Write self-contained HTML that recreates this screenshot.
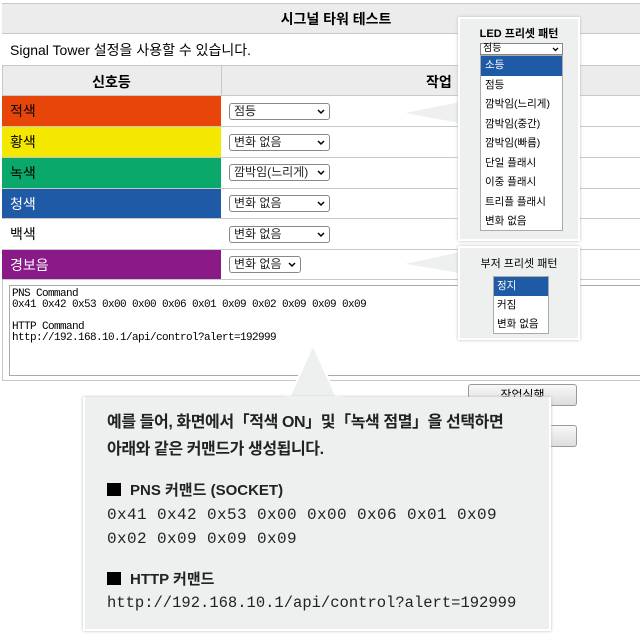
<!DOCTYPE html>
<html><head><meta charset="utf-8"><style>
*{box-sizing:border-box;margin:0;padding:0}
body{width:640px;height:642px;background:#fff;font-family:"Liberation Sans","Noto Sans CJK KR",sans-serif;position:relative;overflow:hidden;color:#000}
.abs{position:absolute}
.hl{position:absolute;left:2px;right:0;height:1px;background:#c8c8c8}
.row{position:absolute;left:2px;width:219px;font-size:14px;padding-left:8px;line-height:30px}
.sel{position:absolute;left:229px;height:17px;border:1px solid #888;border-radius:3px;background:#fff;font-size:12px;line-height:15px;padding-left:4px;color:#222}
.sel svg{position:absolute;right:4px;top:5px}
.pop{position:absolute;background:#eef0f0;border:2px solid #fff;box-shadow:0 0 3px #bbb}
.mono{font-family:"Liberation Mono","DejaVu Sans Mono",monospace}
</style></head><body>
<div class="abs" style="left:2px;top:3px;right:0;height:31px;background:#ececec;border-top:1px solid #c8c8c8;border-bottom:1px solid #c8c8c8;text-align:center;font-weight:bold;font-size:14px;line-height:30px;padding-left:30px">시그널 타워 테스트</div>
<div class="abs" style="left:10px;top:40px;font-size:14px">Signal Tower 설정을 사용할 수 있습니다.</div>
<div class="abs" style="left:2px;top:65px;right:0;height:31px;background:#ececec;border-top:1px solid #c8c8c8;border-bottom:1px solid #c8c8c8"></div>
<div class="abs" style="left:221px;top:65px;width:1px;height:31px;background:#c8c8c8"></div>
<div class="abs" style="left:2px;top:72px;width:219px;text-align:center;font-weight:bold;font-size:14px">신호등</div>
<div class="abs" style="left:426px;top:72px;font-weight:bold;font-size:14px">작업</div>
<div class="abs" style="left:2px;top:65px;width:1px;height:215px;background:#c8c8c8"></div>
<div class="row" style="top:96px;background:#e8450a">적색</div>
<div class="row" style="top:127px;background:#f5e800">황색</div>
<div class="row" style="top:158px;background:#0aa86a">녹색</div>
<div class="row" style="top:189px;background:#1f5aa6;color:#fff">청색</div>
<div class="row" style="top:219px;background:#fff">백색</div>
<div class="row" style="top:250px;background:#8a1a88;color:#fff">경보음</div>
<div class="hl" style="top:126px"></div><div class="hl" style="top:157px"></div><div class="hl" style="top:188px"></div><div class="hl" style="top:218px"></div><div class="hl" style="top:249px"></div><div class="hl" style="top:279px"></div>
<div class="sel" style="top:103px;width:101px">점등<svg width="8" height="6"><path d="M1 1L4 4L7 1" fill="none" stroke="#000" stroke-width="1.5"/></svg></div>
<div class="sel" style="top:134px;width:101px">변화 없음<svg width="8" height="6"><path d="M1 1L4 4L7 1" fill="none" stroke="#000" stroke-width="1.5"/></svg></div>
<div class="sel" style="top:164px;width:101px">깜박임(느리게)<svg width="8" height="6"><path d="M1 1L4 4L7 1" fill="none" stroke="#000" stroke-width="1.5"/></svg></div>
<div class="sel" style="top:195px;width:101px">변화 없음<svg width="8" height="6"><path d="M1 1L4 4L7 1" fill="none" stroke="#000" stroke-width="1.5"/></svg></div>
<div class="sel" style="top:226px;width:101px">변화 없음<svg width="8" height="6"><path d="M1 1L4 4L7 1" fill="none" stroke="#000" stroke-width="1.5"/></svg></div>
<div class="sel" style="top:256px;width:72px">변화 없음<svg width="8" height="6"><path d="M1 1L4 4L7 1" fill="none" stroke="#000" stroke-width="1.5"/></svg></div>
<div class="abs" style="left:2px;top:280px;right:0;height:101px;border-left:1px solid #c8c8c8;border-bottom:1px solid #c8c8c8"></div>
<div class="abs mono" style="left:9px;top:285px;width:640px;height:91px;border:1px solid #aaa;font-size:11px;line-height:11px;padding:3px 0 0 2px;white-space:pre;letter-spacing:-0.6px">PNS Command
0x41 0x42 0x53 0x00 0x00 0x06 0x01 0x09 0x02 0x09 0x09 0x09

HTTP Command
http://192.168.10.1/api/control?alert=192999</div>
<div class="abs" style="left:468px;top:384px;width:109px;height:22px;border:1px solid #999;border-radius:3px;background:linear-gradient(#f8f8f8,#ddd);font-size:12px;text-align:center;line-height:20px">작업실행</div>
<div class="abs" style="left:468px;top:425px;width:109px;height:22px;border:1px solid #999;border-radius:3px;background:linear-gradient(#f8f8f8,#ddd)"></div>
<svg class="abs" style="left:395px;top:95px" width="70" height="35"><polygon points="70,5 5,18 70,30" fill="#eef0f0" stroke="#fff" stroke-width="2"/></svg>
<svg class="abs" style="left:395px;top:245px" width="70" height="35"><polygon points="70,5 5,19 70,30" fill="#eef0f0" stroke="#fff" stroke-width="2"/></svg>
<div class="pop" style="left:458px;top:17px;width:122px;height:224px">
 <div style="text-align:center;font-size:11px;font-weight:bold;margin-top:6px">LED 프리셋 패턴</div>
 <div style="position:absolute;left:20px;top:24px;width:83px;height:12px;border:1px solid #888;background:#fff;font-size:10px;line-height:10px;padding-left:2px">점등<svg style="position:absolute;right:3px;top:3px" width="7" height="5"><path d="M1 1L3.5 3.5L6 1" fill="none" stroke="#000" stroke-width="1.3"/></svg></div>
 <div style="position:absolute;left:20px;top:36px;width:83px;height:176px;border:1px solid #aaa;background:#fff;font-size:10.5px;line-height:19.5px">
  <div style="background:#1f5aa6;color:#fff;padding-left:4px">소등</div>
  <div style="padding-left:4px">점등</div><div style="padding-left:4px">깜박임(느리게)</div><div style="padding-left:4px">깜박임(중간)</div><div style="padding-left:4px">깜박임(빠름)</div><div style="padding-left:4px">단일 플래시</div><div style="padding-left:4px">이중 플래시</div><div style="padding-left:4px">트리플 플래시</div><div style="padding-left:4px">변화 없음</div>
 </div>
</div>
<div class="pop" style="left:458px;top:246px;width:122px;height:94px">
 <div style="text-align:center;font-size:11px;margin-top:7px">부저 프리셋 패턴</div>
 <div style="position:absolute;left:33px;top:28px;width:56px;height:58px;border:1px solid #aaa;background:#fff;font-size:10.5px;line-height:19px">
  <div style="background:#1f5aa6;color:#fff;padding-left:3px">정지</div><div style="padding-left:3px">커짐</div><div style="padding-left:3px">변화 없음</div>
 </div>
</div>
<svg class="abs" style="left:280px;top:340px" width="70" height="62"><polygon points="8,60 33,5 58,60" fill="#eef0f0" stroke="#fff" stroke-width="2"/></svg>
<div class="pop" style="left:83px;top:397px;width:468px;height:234px;border-top:none">
 <div style="position:absolute;left:22px;top:12px;font-size:16px;font-weight:bold;line-height:27px;color:#222;letter-spacing:-0.4px;white-space:nowrap">예를 들어, 화면에서「적색 ON」및「녹색 점멸」을 선택하면<br>아래와 같은 커맨드가 생성됩니다.</div>
 <div style="position:absolute;left:22px;top:82px;font-size:15px;font-weight:bold;color:#222"><span style="display:inline-block;width:14px;height:13px;background:#000;margin-right:9px;vertical-align:-1px"></span>PNS 커맨드 (SOCKET)</div>
 <div style="position:absolute;left:22px;top:106px;font-size:16px;line-height:24px;color:#222;letter-spacing:0.4px;white-space:nowrap" class="mono">0x41 0x42 0x53 0x00 0x00 0x06 0x01 0x09<br>0x02 0x09 0x09 0x09</div>
 <div style="position:absolute;left:22px;top:171px;font-size:15px;font-weight:bold;color:#222"><span style="display:inline-block;width:14px;height:13px;background:#000;margin-right:9px;vertical-align:-1px"></span>HTTP 커맨드</div>
 <div style="position:absolute;left:22px;top:197px;font-size:15.5px;color:#222;white-space:nowrap" class="mono">http://192.168.10.1/api/control?alert=192999</div>
</div>
<div class="abs" style="left:284px;top:396px;width:58px;height:3px;background:#eef0f0"></div>
</body></html>
